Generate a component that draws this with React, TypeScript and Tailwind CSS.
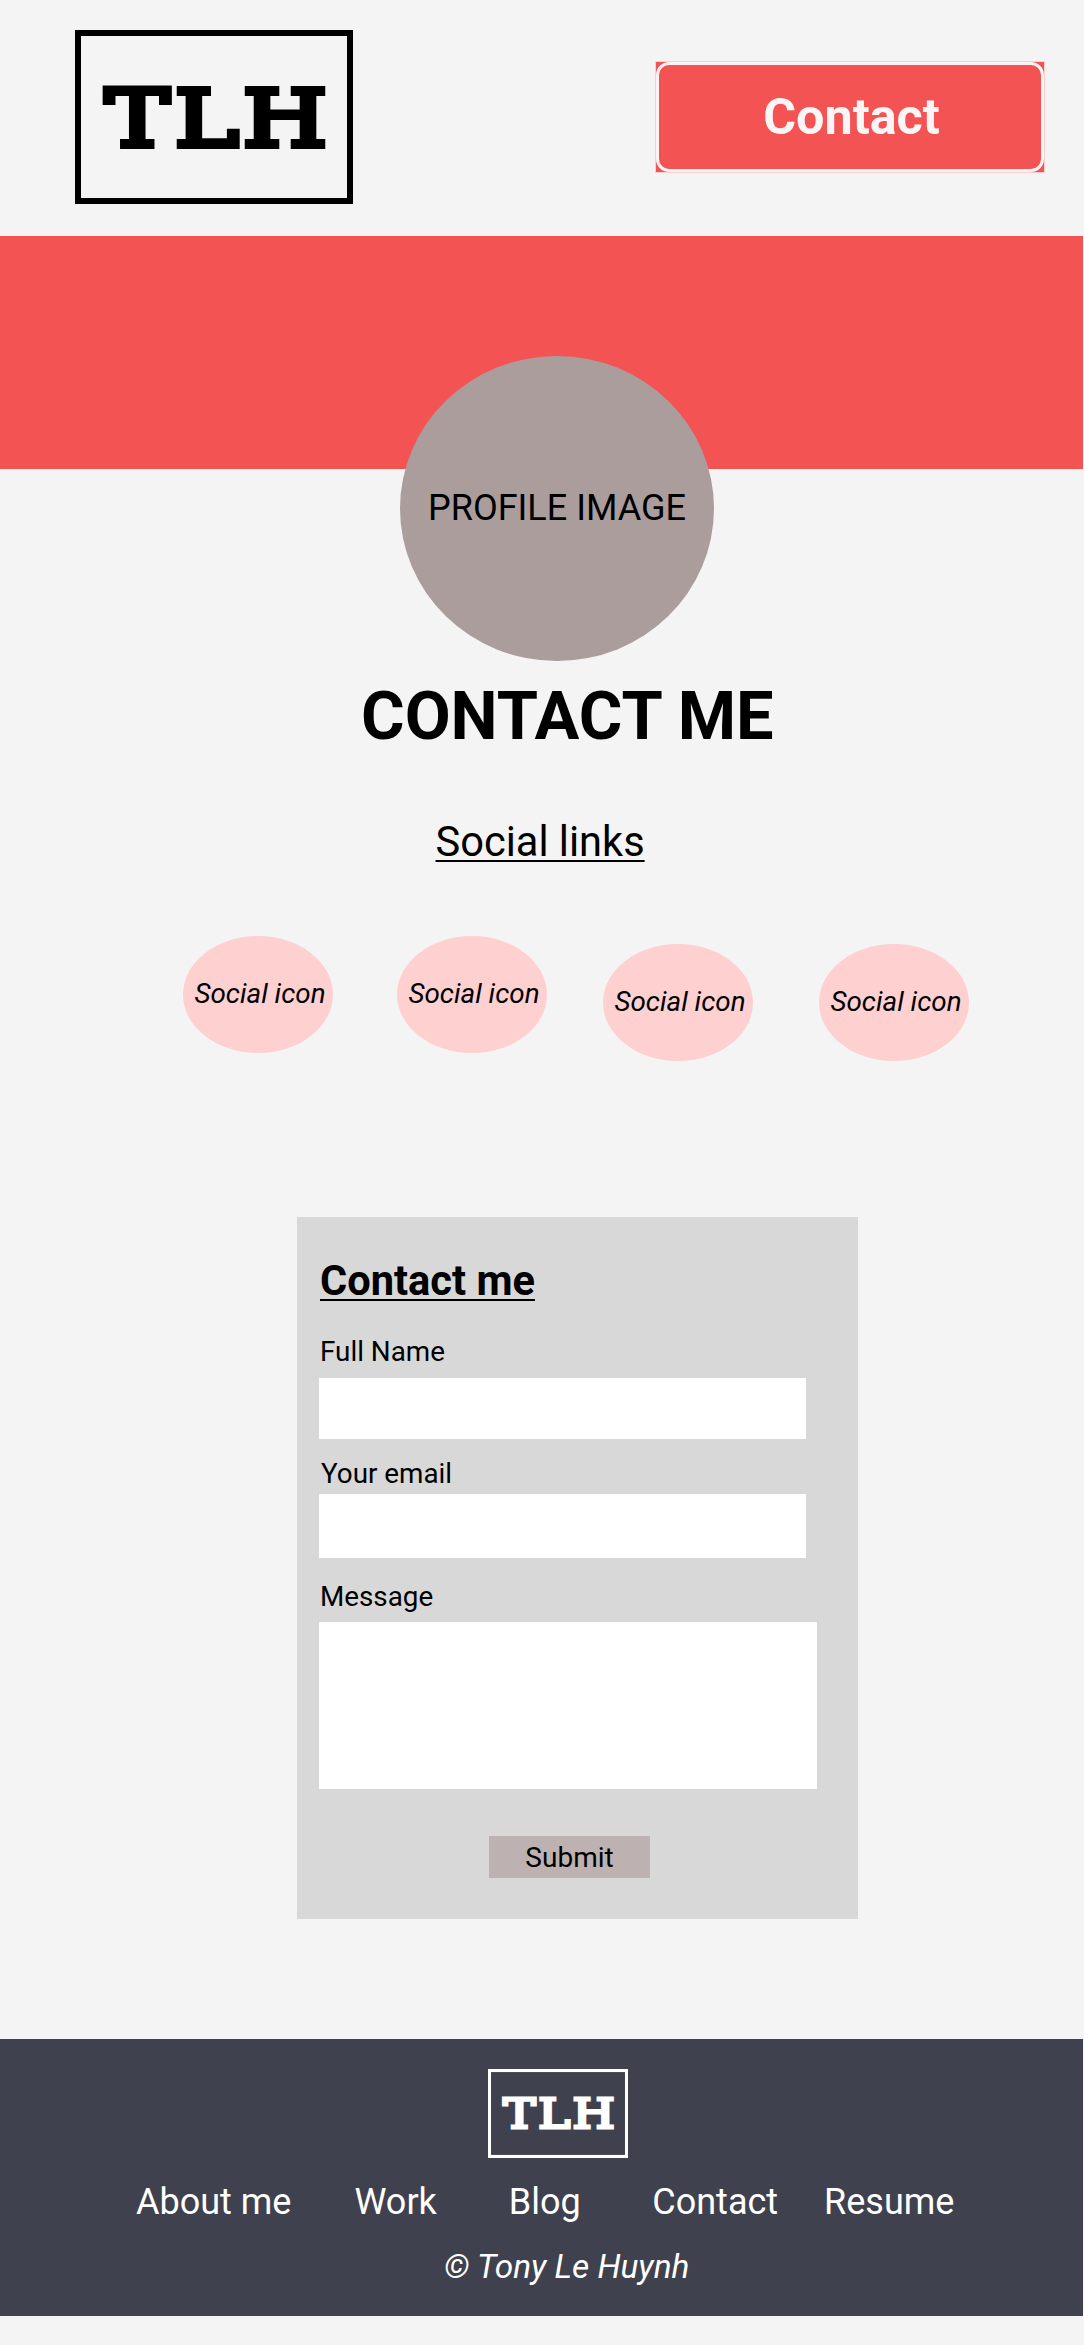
import React from "react";

function Logo({ className, weight }: { className: string; weight: number }) {
  const letters = [
    { char: "T", transform: "translate(30.3 115.7) scale(1.215 1)" },
    { char: "L", transform: "translate(100 115.7) scale(1.21 1)" },
    { char: "H", transform: "translate(168 115.7) scale(1.22 1)" },
  ];
  return (
    <svg viewBox="0 0 278 174" preserveAspectRatio="none" className={className} role="img" aria-label="TLH">
      <rect x="3" y="3" width="272" height="168" fill="none" stroke="currentColor" strokeWidth="6" />
      {letters.map((l) => (
        <text
          key={l.char}
          transform={l.transform}
          fill="currentColor"
          stroke="currentColor"
          strokeWidth={weight}
          vectorEffect="non-scaling-stroke"
          className="font-['DejaVu_Serif',serif] text-[79px] font-normal"
        >
          {l.char}
        </text>
      ))}
    </svg>
  );
}

function SocialIcon({ className }: { className: string }) {
  return (
    <a
      className={`flex h-[117px] w-[150px] items-center justify-center rounded-[50%] bg-[#fed0d0] pb-[3px] pl-[4px] text-[27.8px] leading-[33px] whitespace-nowrap italic ${className}`}
    >
      Social icon
    </a>
  );
}

function Header() {
  return (
    <header className="flex h-[236px] items-start justify-between pr-[39px] pl-[75px]">
      <Logo className="mt-[30px] h-[174px] w-[278px] text-black" weight={6.5} />
      <div className="mt-[61px] h-[112px] w-[390px] border border-[#f9cfcf] bg-[#f35352]">
        <button className="flex h-full w-full items-center justify-center rounded-[13px] border-[3px] border-[#f8f4f4] pb-px pl-[3px] text-[50.3px] leading-[58px] font-bold text-[#fbf5f5]">
          Contact
        </button>
      </div>
    </header>
  );
}

function ContactForm() {
  return (
    <form className="mt-[156px] ml-[297px] flex h-[702px] w-[561px] flex-col items-start bg-[#d8d8d8] pt-[39px] pl-[22px] text-[28px] leading-[33px]">
      <h2 className="ml-px text-[41.6px] leading-[49px] font-bold underline decoration-2 underline-offset-[4px] [text-decoration-skip-ink:none]">
        Contact me
      </h2>
      <label htmlFor="name" className="mt-[30px] ml-px text-[27.8px]">Full Name</label>
      <input id="name" className="mt-[10px] h-[61px] w-[487px] bg-white px-3" />
      <label htmlFor="email" className="mt-[18px] ml-[2px] text-[27.8px]">Your email</label>
      <input id="email" className="mt-[4px] h-[64px] w-[487px] bg-white px-3" />
      <label htmlFor="message" className="mt-[22px] ml-px text-[27.8px]">Message</label>
      <textarea id="message" className="mt-[9px] h-[167px] w-[498px] resize-none bg-white p-3" />
      <button type="button" className="mt-[47px] ml-[170px] flex h-[42px] w-[161px] items-center justify-center bg-[#beb1b1]">
        Submit
      </button>
    </form>
  );
}

function Footer() {
  return (
    <footer className="mt-[120px] flex h-[277px] w-[1083px] flex-col items-start bg-[#3f424e] pt-[30px] text-white">
      <Logo className="ml-[488px] h-[89px] w-[140px]" weight={3.2} />
      <nav className="mt-[23px] ml-[136px] flex text-[36px] leading-[42px] whitespace-nowrap">
        <a>About me</a>
        <a className="ml-[63px]">Work</a>
        <a className="ml-[72px]">Blog</a>
        <a className="ml-[71.5px]">Contact</a>
        <a className="ml-[46px]">Resume</a>
      </nav>
      <p className="mt-[24px] ml-[444px] text-[33.4px] leading-[39px] whitespace-nowrap italic">© Tony Le Huynh</p>
    </footer>
  );
}

export default function App() {
  return (
    <div className="flex h-[2345px] w-[1084px] flex-col overflow-hidden bg-[#f4f4f4] font-[Roboto,sans-serif] text-black">
      <Header />
      <div className="h-[233px] w-[1083px] shrink-0 bg-[#f35352]" />
      <main className="flex flex-col items-start">
        <div className="-mt-[113.5px] ml-[400px] flex h-[305.5px] w-[314px] items-center justify-center rounded-[50%] bg-[#ab9d9c] text-[36px] leading-[42px]">
          PROFILE IMAGE
        </div>
        <h1 className="mt-[17px] ml-[361px] text-[66.7px] leading-[77px] font-bold whitespace-nowrap">CONTACT ME</h1>
        <h2 className="mt-[62px] ml-[435.5px] text-[41.6px] leading-[49px] whitespace-nowrap underline decoration-2 underline-offset-[4px] [text-decoration-skip-ink:none]">
          Social links
        </h2>
        <div className="mt-[70px] flex h-[125px] pl-[183px]">
          <SocialIcon className="" />
          <SocialIcon className="ml-[64px]" />
          <SocialIcon className="mt-[8px] ml-[56px]" />
          <SocialIcon className="mt-[8px] ml-[66px]" />
        </div>
        <ContactForm />
      </main>
      <Footer />
    </div>
  );
}
